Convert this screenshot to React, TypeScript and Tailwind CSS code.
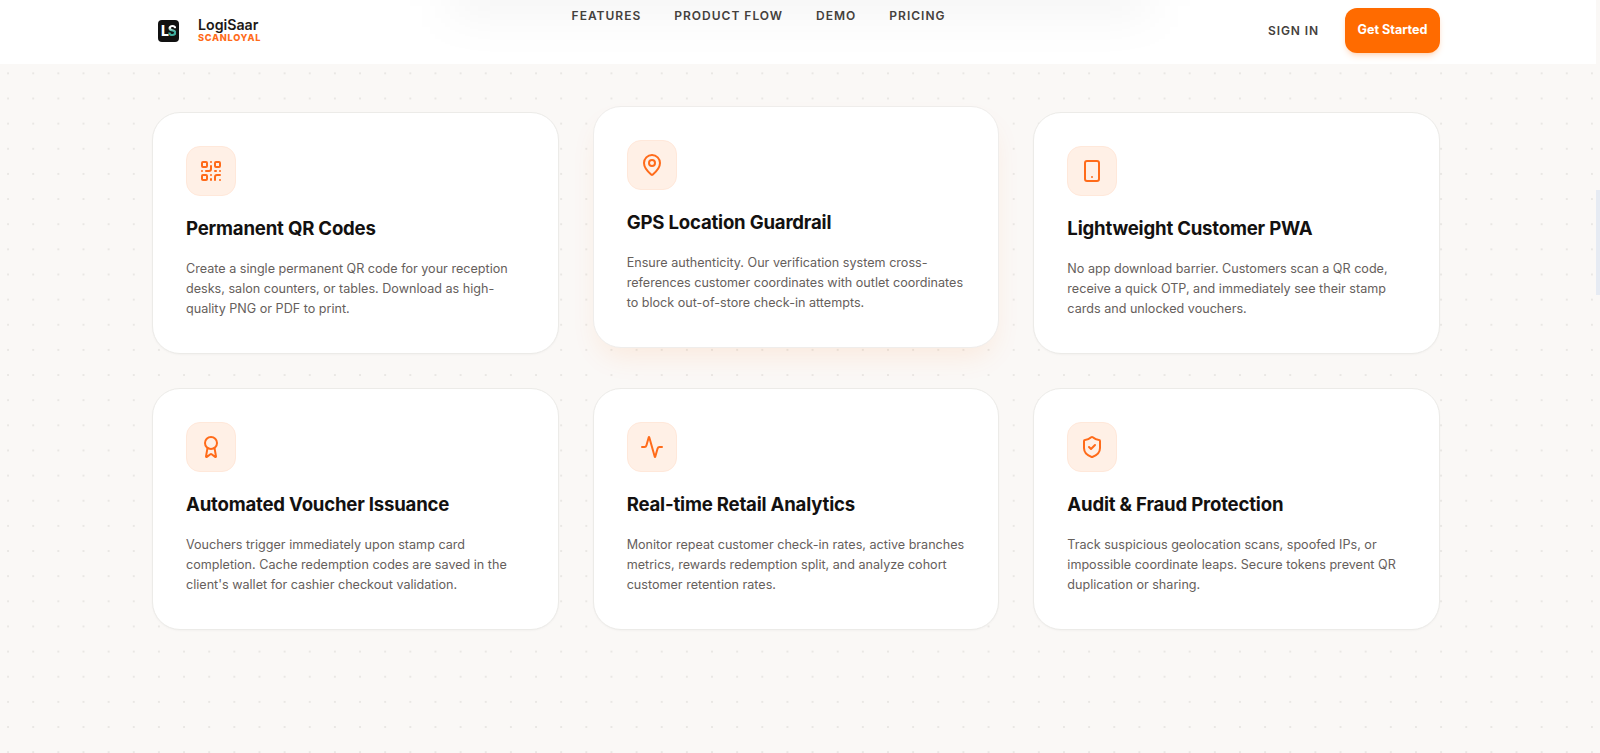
import React from 'react';
import { QrCode, MapPin, Smartphone, Award, Activity, ShieldCheck } from 'lucide-react';

const features = [
  {
    icon: QrCode,
    title: 'Permanent QR Codes',
    text: 'Create a single permanent QR code for your reception desks, salon counters, or tables. Download as high-quality PNG or PDF to print.',
  },
  {
    icon: MapPin,
    title: 'GPS Location Guardrail',
    text: 'Ensure authenticity. Our verification system cross-references customer coordinates with outlet coordinates to block out-of-store check-in attempts.',
    raised: true,
  },
  {
    icon: Smartphone,
    title: 'Lightweight Customer PWA',
    text: 'No app download barrier. Customers scan a QR code, receive a quick OTP, and immediately see their stamp cards and unlocked vouchers.',
  },
  {
    icon: Award,
    title: 'Automated Voucher Issuance',
    text: "Vouchers trigger immediately upon stamp card completion. Cache redemption codes are saved in the client's wallet for cashier checkout validation.",
  },
  {
    icon: Activity,
    title: 'Real-time Retail Analytics',
    text: 'Monitor repeat customer check-in rates, active branches metrics, rewards redemption split, and analyze cohort customer retention rates.',
  },
  {
    icon: ShieldCheck,
    title: 'Audit & Fraud Protection',
    text: 'Track suspicious geolocation scans, spoofed IPs, or impossible coordinate leaps. Secure tokens prevent QR duplication or sharing.',
  },
];

function Navbar() {
  return (
    <header className="relative h-[64px] overflow-hidden bg-white pl-[158px] pr-[156px] flex items-start justify-between">
      <div className="absolute left-[450px] top-[-24px] w-[700px] h-[36px] bg-black/5 blur-xl" />
      <div className="relative flex items-center gap-[19px] pt-[19px]">
        <div className="w-[21px] h-[22px] rounded-[4px] bg-[#111111] flex items-center justify-center text-[14px] leading-none font-extrabold tracking-[-1px]">
          <span className="text-white">L</span>
          <span className="bg-gradient-to-b from-white from-25% to-[#3fae9f] to-50% bg-clip-text text-transparent">S</span>
        </div>
        <div className="flex flex-col -mt-[2px]">
          <span className="text-[14.2px] leading-[16px] font-semibold text-[#1c1917]">LogiSaar</span>
          <span className="text-[9.2px] leading-[10px] font-extrabold tracking-[0.7px] text-[#ff6b1a]">SCANLOYAL</span>
        </div>
      </div>
      <nav className="relative flex gap-[33px] pt-[8px] pr-[12px] text-[12px] leading-[16px] font-semibold tracking-[1px] text-[#44403c]">
        <a>FEATURES</a>
        <a>PRODUCT FLOW</a>
        <a>DEMO</a>
        <a>PRICING</a>
      </nav>
      <div className="relative flex items-center gap-[26px] pt-[8px]">
        <a className="text-[12px] font-semibold tracking-[0.9px] text-[#44403c]">SIGN IN</a>
        <button className="w-[95px] h-[45px] rounded-[12px] bg-[#ff6b00] text-white text-[12.6px] font-bold shadow-md shadow-orange-500/20">
          Get Started
        </button>
      </div>
    </header>
  );
}

function FeatureCard({ icon: Icon, title, text, raised }: (typeof features)[number]) {
  return (
    <div
      className={
        raised
          ? 'h-[242px] -mt-[6px] mb-[6px] rounded-[28px] border border-[#efedeb] bg-white p-[33px] shadow-[0_14px_28px_-6px_rgba(255,107,0,0.1)]'
          : 'h-[242px] rounded-[28px] border border-[#ecebe8] bg-white p-[33px] shadow-[0_1px_2px_rgba(0,0,0,0.03)]'
      }
    >
      <div className="w-[50px] h-[50px] rounded-[14px] bg-[#fff0e6] border border-[#ffe8da] flex items-center justify-center">
        <Icon className="w-[24px] h-[24px] text-[#ff6b1a]" strokeWidth={2} />
      </div>
      <h3 className="mt-[18px] text-[18.6px] leading-[28px] font-bold tracking-[-0.2px] text-[#131110]">{title}</h3>
      <p className="mt-[17px] text-[12.6px] leading-[20px] text-[#66605c]">{text}</p>
    </div>
  );
}

export default function App() {
  return (
    <div className="relative min-h-[753px] font-['Inter','Noto_Sans',sans-serif] bg-[#faf8f6] bg-[radial-gradient(#e9e7e4_1px,transparent_1.4px)] bg-[size:25.15px_25.15px] bg-[position:-4.5px_10.5px] pr-[4px]">
      <Navbar />
      <main className="pl-[152px] pr-[156px] pt-[48px]">
        <div className="grid grid-cols-3 gap-x-[34px] gap-y-[34px]">
          {features.map((f) => (
            <FeatureCard key={f.title} {...f} />
          ))}
        </div>
      </main>
      {/* scrollbar thumb */}
      <div className="absolute right-0 top-[190px] w-[4px] h-[105px] bg-[#e6ebf3]" />
    </div>
  );
}
